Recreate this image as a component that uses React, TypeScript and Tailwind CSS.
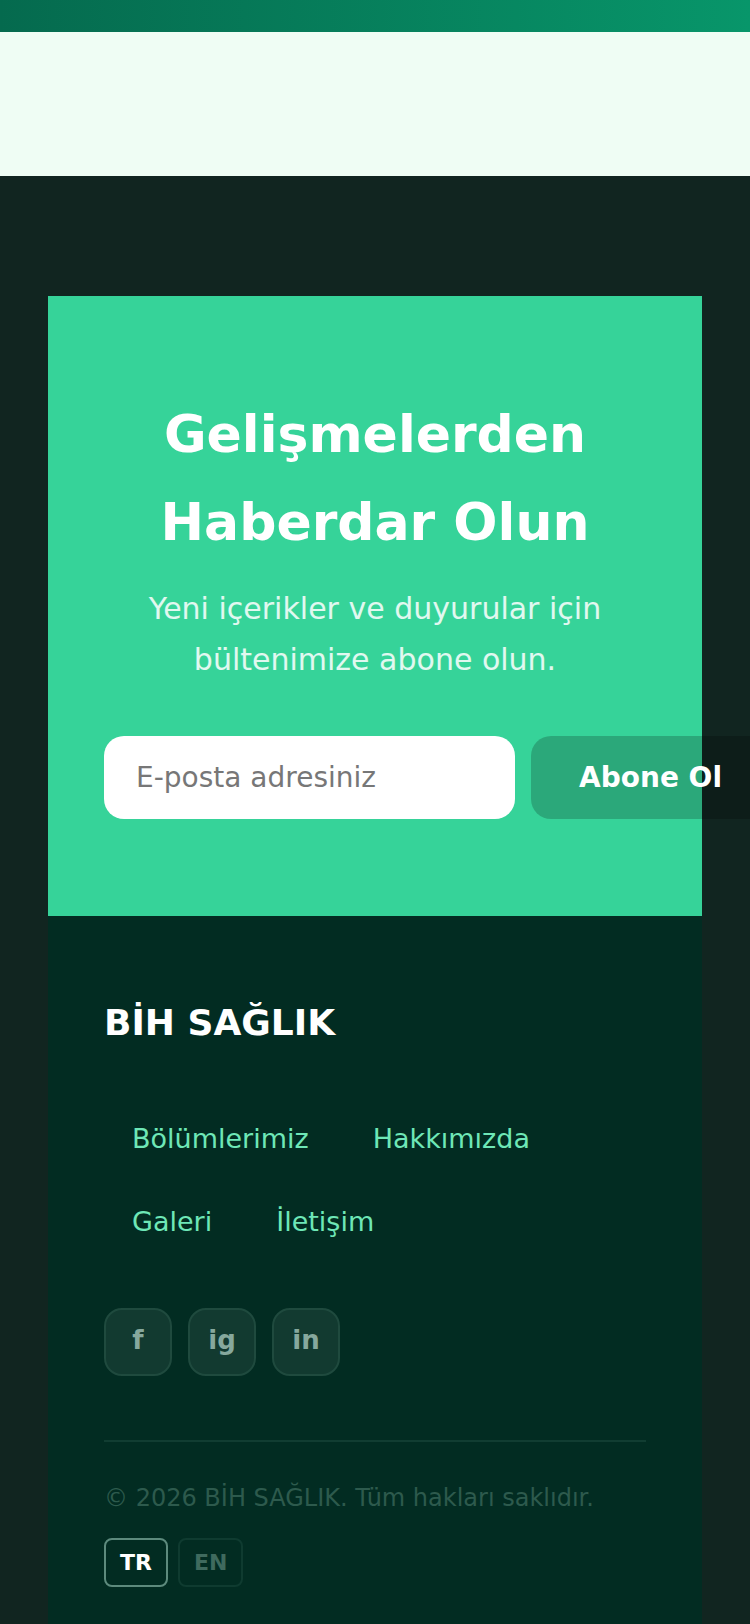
import React from 'react'

const LINKS = ['Bölümlerimiz', 'Hakkımızda', 'Galeri', 'İletişim']
const SOCIALS = ['f', 'ig', 'in']

export default function App() {
  return (
    <div
      className="min-h-screen w-full overflow-x-hidden bg-[#112520]"
      style={{ fontFamily: '"DejaVu Sans", "Noto Sans", sans-serif' }}
    >
      {/* top strip */}
      <div className="h-[32px] bg-gradient-to-r from-[#056a4e] to-[#08966a]" />
      {/* light band */}
      <div className="h-[144px] bg-[#effdf4]" />

      <div className="px-[48px] pt-[120px]">
        <div className="bg-[#022c22]">
          {/* newsletter */}
          <div className="bg-[#36d399] px-[56px] pt-[94px] pb-[97px] text-center">
            <h2 className="text-[52px] font-bold leading-[88px] text-white">Gelişmelerden Haberdar Olun</h2>
            <p className="mt-[17px] text-[30px] leading-[51px] text-white/85">
              Yeni içerikler ve duyurular için bültenimize abone olun.
            </p>
            <div className="mt-[51px] flex gap-[16px]">
              <input
                type="email"
                placeholder="E-posta adresiniz"
                className="h-[83px] w-[411px] shrink-0 rounded-[20px] bg-white px-[32px] text-[28px] text-gray-800 outline-none placeholder:text-[#777777]"
              />
              <button className="h-[83px] shrink-0 whitespace-nowrap rounded-[20px] bg-black/20 px-[48px] text-[28px] font-bold text-white">
                Abone Ol
              </button>
            </div>
          </div>

          {/* footer */}
          <div className="px-[56px] pt-[80px] pb-[60px]">
            <div className="text-[36px] font-bold leading-[54px] text-white">BİH SAĞLIK</div>

            <nav className="mt-[52px] flex max-w-[480px] flex-wrap gap-[8px]">
              {LINKS.map((l) => (
                <a key={l} href="#" className="flex h-[75px] items-center px-[28px] text-[27px] text-[#6ee7b7]">
                  {l}
                </a>
              ))}
            </nav>

            <div className="mt-[48px] flex gap-[16px]">
              {SOCIALS.map((s) => (
                <a
                  key={s}
                  href="#"
                  className="flex h-[68px] w-[68px] items-center justify-center rounded-[18px] border-2 border-[#1f4a3e] bg-[#123a30] pb-[4px] text-[26px] font-bold text-[#86a89d]"
                >
                  {s}
                </a>
              ))}
            </div>

            <div className="mt-[64px] h-[2px] bg-[#113d32]" />

            <p className="mt-[38px] text-[24px] text-[#2d5a4d]">© 2026 BİH SAĞLIK. Tüm hakları saklıdır.</p>

            <div className="mt-[22px] flex gap-[10px]">
              <button className="h-[49px] rounded-[8px] border-2 border-[#5d8a7d] px-[14px] text-[22px] font-bold text-white">
                TR
              </button>
              <button className="h-[49px] rounded-[8px] border-2 border-[#0f3b30] px-[14px] text-[22px] font-bold text-[#3f6a5e]">
                EN
              </button>
            </div>
          </div>
        </div>
      </div>
    </div>
  )
}
